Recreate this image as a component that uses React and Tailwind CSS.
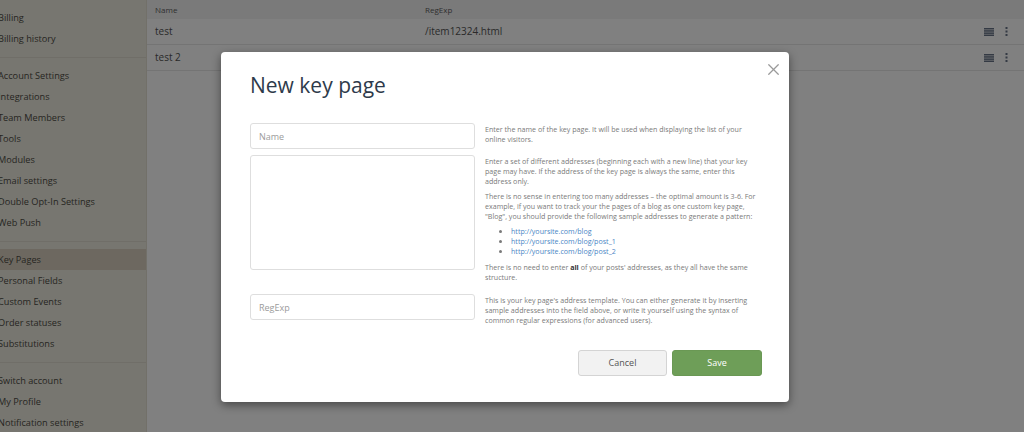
import React from 'react';
import { X } from 'lucide-react';

const groups = [
  ['Billing', 'Billing history'],
  ['Account Settings', 'Integrations', 'Team Members', 'Tools', 'Modules', 'Email settings', 'Double Opt-In Settings', 'Web Push'],
  ['Key Pages', 'Personal Fields', 'Custom Events', 'Order statuses', 'Substitutions'],
  ['Switch account', 'My Profile', 'Notification settings'],
];

const rows = [
  { name: 'test', regexp: '/item12324.html' },
  { name: 'test 2', regexp: '' },
];

const Sidebar = () => (
  <div className="w-[147px] shrink-0 bg-[#777670] border-r border-[#727069] pt-[7px]">
    {groups.map((items, gi) => (
      <div key={gi} className={gi > 0 ? 'border-t border-[#706e68] pt-[7px] mt-[8px]' : ''}>
        {items.map((item) => (
          <div
            key={item}
            className={`h-[21px] flex items-center -ml-[2px] text-[9.2px] text-[#26251f] ${item === 'Key Pages' ? 'bg-[#6d6860]' : ''}`}
          >
            {item}
          </div>
        ))}
      </div>
    ))}
  </div>
);

const RowIcons = () => (
  <div className="flex items-center gap-[11px]">
    <svg width="10" height="8" viewBox="0 0 10 8">
      <rect x="0" y="0" width="10" height="1.5" fill="#343a44" />
      <rect x="0" y="2.2" width="10" height="1.5" fill="#343a44" />
      <rect x="0" y="4.4" width="10" height="1.5" fill="#343a44" />
      <rect x="0" y="6.5" width="10" height="1.5" fill="#343a44" />
    </svg>
    <svg width="3" height="9" viewBox="0 0 3 9">
      <rect x="0.5" y="0" width="2" height="2" fill="#343a44" />
      <rect x="0.5" y="3.5" width="2" height="2" fill="#343a44" />
      <rect x="0.5" y="7" width="2" height="2" fill="#343a44" />
    </svg>
  </div>
);

const Table = () => (
  <div className="flex-1 bg-[#808080]">
    <div className="h-[19px] bg-[#7a7a7a] flex items-center text-[8px] text-[#2f2f2f]">
      <div className="w-[278px] pl-[8px]">Name</div>
      <div>RegExp</div>
    </div>
    {rows.map((r) => (
      <div key={r.name} className="h-[26px] border-b border-[#747474] flex items-center text-[10px] text-[#2a2a2a]">
        <div className="w-[278px] pl-[8px]">{r.name}</div>
        <div className="flex-1">{r.regexp}</div>
        <div className="pr-[16px]">
          <RowIcons />
        </div>
      </div>
    ))}
  </div>
);

const Modal = () => (
  <div className="absolute left-[221px] top-[52px] w-[568px] h-[350px] bg-white rounded-[4px] shadow-[0_3px_10px_rgba(0,0,0,0.45)] px-[29px] pt-[17px]">
    <button className="absolute right-[6px] top-[8px] text-[#9a9a9a]">
      <X size={19} strokeWidth={1.6} />
    </button>
    <h2 className="text-[21px] leading-[32px] text-[#2e3a4a] font-normal">New key page</h2>
    <div className="mt-[22px] grid grid-cols-[225px_1fr] gap-x-[10px] text-[7.1px] leading-[10px] text-[#7a7a7a]">
      <input
        placeholder="Name"
        className="h-[26px] border border-[#dedede] rounded-[3px] px-[8px] text-[9px] text-[#555] placeholder:text-[#9b9b9b] outline-none"
      />
      <div className="pt-[1px] pr-[2px]">
        Enter the name of the key page. It will be used when displaying the list of your online visitors.
      </div>
      <textarea className="mt-[6px] h-[115px] border border-[#dedede] rounded-[3px] resize-none outline-none" />
      <div className="mt-[6px] pt-[1px] pr-[2px]">
        <p>Enter a set of different addresses (beginning each with a new line) that your key page may have. If the address of the key page is always the same, enter this address only.</p>
        <p className="mt-[5px]">There is no sense in entering too many addresses – the optimal amount is 3-6. For example, if you want to track your the pages of a blog as one custom key page, "Blog", you should provide the following sample addresses to generate a pattern:</p>
        <ul className="mt-[5px] pl-[26px] list-disc text-[#4a86c5] marker:text-[#7a7a7a]">
          <li>http://yoursite.com/blog</li>
          <li>http://yoursite.com/blog/post_1</li>
          <li>http://yoursite.com/blog/post_2</li>
        </ul>
        <p className="mt-[6px]">There is no need to enter <b className="text-[#333]">all</b> of your posts' addresses, as they all have the same structure.</p>
      </div>
      <input
        placeholder="RegExp"
        className="mt-[12px] h-[26px] border border-[#dedede] rounded-[3px] px-[8px] text-[9px] text-[#555] placeholder:text-[#9b9b9b] outline-none"
      />
      <div className="mt-[12px] pt-[1px] pr-[2px]">
        This is your key page's address template. You can either generate it by inserting sample addresses into the field above, or write it yourself using the syntax of common regular expressions (for advanced users).
      </div>
    </div>
    <div className="mt-[25px] flex justify-end gap-[5px] -mr-[2px]">
      <button className="w-[89px] h-[26px] bg-[#f2f2f2] border border-[#d4d4d4] rounded-[3px] text-[9px] text-[#555]">Cancel</button>
      <button className="w-[90px] h-[26px] bg-[#6e9e58] border border-[#6a9854] rounded-[3px] text-[9px] text-white">Save</button>
    </div>
  </div>
);

export default function App() {
  return (
    <div className="relative w-[1024px] h-[432px] overflow-hidden flex bg-[#808080]" style={{ fontFamily: '"Open Sans", "Noto Sans", sans-serif' }}>
      <Sidebar />
      <Table />
      <Modal />
    </div>
  );
}
